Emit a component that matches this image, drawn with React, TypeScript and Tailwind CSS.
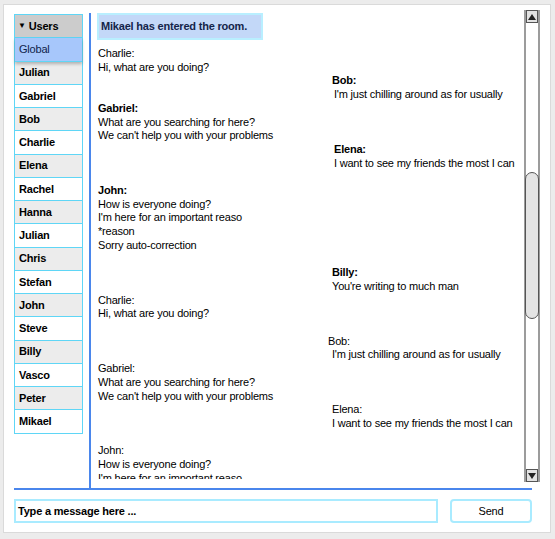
import React from 'react';

type Line = { text: string; bold?: boolean; indent?: number };
type Block = { side: 'left' | 'right'; lines: Line[]; gapBefore?: boolean };

const users = [
  'Julian', 'Gabriel', 'Bob', 'Charlie', 'Elena', 'Rachel', 'Hanna', 'Julian',
  'Chris', 'Stefan', 'John', 'Steve', 'Billy', 'Vasco', 'Peter', 'Mikael',
];

const blocks: Block[] = [
  { side: 'left', lines: [{ text: 'Charlie:' }, { text: 'Hi, what are you doing?' }] },
  { side: 'right', lines: [{ text: 'Bob:', bold: true, indent: 234 }, { text: "I'm just chilling around as for usually", indent: 236 }] },
  { side: 'left', lines: [{ text: 'Gabriel:', bold: true }, { text: 'What are you searching for here?' }, { text: "We can't help you with your problems" }] },
  { side: 'right', lines: [{ text: 'Elena:', bold: true, indent: 236 }, { text: 'I want to see my friends the most I can', indent: 236 }] },
  { side: 'left', gapBefore: true, lines: [{ text: 'John:', bold: true }, { text: 'How is everyone doing?' }, { text: "I'm here for an important reaso" }, { text: '*reason' }, { text: 'Sorry auto-correction' }] },
  { side: 'right', gapBefore: true, lines: [{ text: 'Billy:', bold: true, indent: 234 }, { text: "You're writing to much man", indent: 234 }] },
  { side: 'left', lines: [{ text: 'Charlie:' }, { text: 'Hi, what are you doing?' }] },
  { side: 'right', gapBefore: true, lines: [{ text: 'Bob:', indent: 230 }, { text: "I'm just chilling around as for usually", indent: 234 }] },
  { side: 'left', lines: [{ text: 'Gabriel:' }, { text: 'What are you searching for here?' }, { text: "We can't help you with your problems" }] },
  { side: 'right', lines: [{ text: 'Elena:', indent: 234 }, { text: 'I want to see my friends the most I can', indent: 234 }] },
  { side: 'left', gapBefore: true, lines: [{ text: 'John:' }, { text: 'How is everyone doing?' }, { text: "I'm here for an important reaso" }, { text: '*reason' }] },
];

function Scrollbar() {
  return (
    <div className="w-[16px] h-[472px] border-x-2 border-[#9c9c9c] bg-white flex flex-col items-stretch">
      <div className="h-[13px] bg-[#e2e2e2] border border-[#555] flex items-center justify-center">
        <div className="w-0 h-0 border-x-[4px] border-x-transparent border-b-[6px] border-b-[#222]" />
      </div>
      <div className="flex-1 flex flex-col pt-[149px] pb-[150px]">
        <div className="flex-1 bg-[#e4e4e4] border border-[#555] rounded-full -mx-[1px]" />
      </div>
      <div className="h-[13px] bg-[#e2e2e2] border border-[#555] flex items-center justify-center">
        <div className="w-0 h-0 border-x-[4px] border-x-transparent border-t-[6px] border-t-[#222]" />
      </div>
    </div>
  );
}

export default function App() {
  return (
    <div className="w-[555px] h-[539px] bg-[#ececec] pt-[4px] pl-[3px] text-[11px] tracking-[-0.2px] text-black" style={{ fontFamily: '"Liberation Sans", Arial, sans-serif' }}>
      <div className="w-[548px] h-[529px] bg-white border border-[#dadada] pt-[5px] pl-[10px]">
        <div className="flex items-start">
          {/* user list */}
          <div className="mt-[4px] w-[69px] border border-[#5fd6f6] border-b-0">
            <div className="h-[23.25px] bg-[#cccccc] border-b border-[#5fd6f6] flex items-center pl-[3px] font-bold">
              <span className="text-[8px] mr-[3px]">▼</span>Users
            </div>
            <div className="h-[23.25px] bg-[#a7c7fb] border-b border-[#5fd6f6] flex items-center pl-[4px] text-[#10244a] shadow-[0_2px_3px_rgba(0,0,0,0.25)] relative">
              Global
            </div>
            {users.map((u, i) => (
              <div
                key={i}
                className={`h-[23.25px] border-b border-[#5fd6f6] flex items-center pl-[4px] font-bold ${i % 2 === 0 ? 'bg-[#ececec]' : 'bg-white'}`}
              >
                {u}
              </div>
            ))}
          </div>

          {/* chat */}
          <div className="ml-[6px] mt-[3px] w-[433px] h-[476px] border-l-2 border-[#4a86ec]">
            <div className="h-[466px] overflow-hidden pl-[6px]">
              <div className="w-[166px] h-[27px] border-2 border-[#b9efff] bg-[#c3d8f8] flex items-center pl-[2px] font-bold text-[#14254a]">
                Mikael has entered the room.
              </div>
              <div className="mt-[7px] pl-[1px] leading-[13.7px]">
                {blocks.map((b, bi) => (
                  <div key={bi} className={b.gapBefore ? 'mt-[13.7px]' : ''}>
                    {b.lines.map((l, li) => (
                      <div
                        key={li}
                        className={`whitespace-nowrap ${l.bold ? 'font-bold' : ''}`}
                        style={{ marginLeft: l.indent ?? 0 }}
                      >
                        {l.text}
                      </div>
                    ))}
                  </div>
                ))}
              </div>
            </div>
          </div>

          <div className="ml-[2px]">
            <Scrollbar />
          </div>
        </div>

        <div className="w-[518px] h-[2px] bg-[#4a86ec] -mt-[1px]" />

        <div className="flex mt-[9px]">
          <div className="w-[424px] h-[24px] border-2 border-[#a9ebff] flex items-center pl-[2px] font-bold">
            Type a message here ...
          </div>
          <div className="ml-[12px] w-[82px] h-[24px] border-2 border-[#a9ebff] rounded-[4px] flex items-center justify-center">
            Send
          </div>
        </div>
      </div>
    </div>
  );
}
